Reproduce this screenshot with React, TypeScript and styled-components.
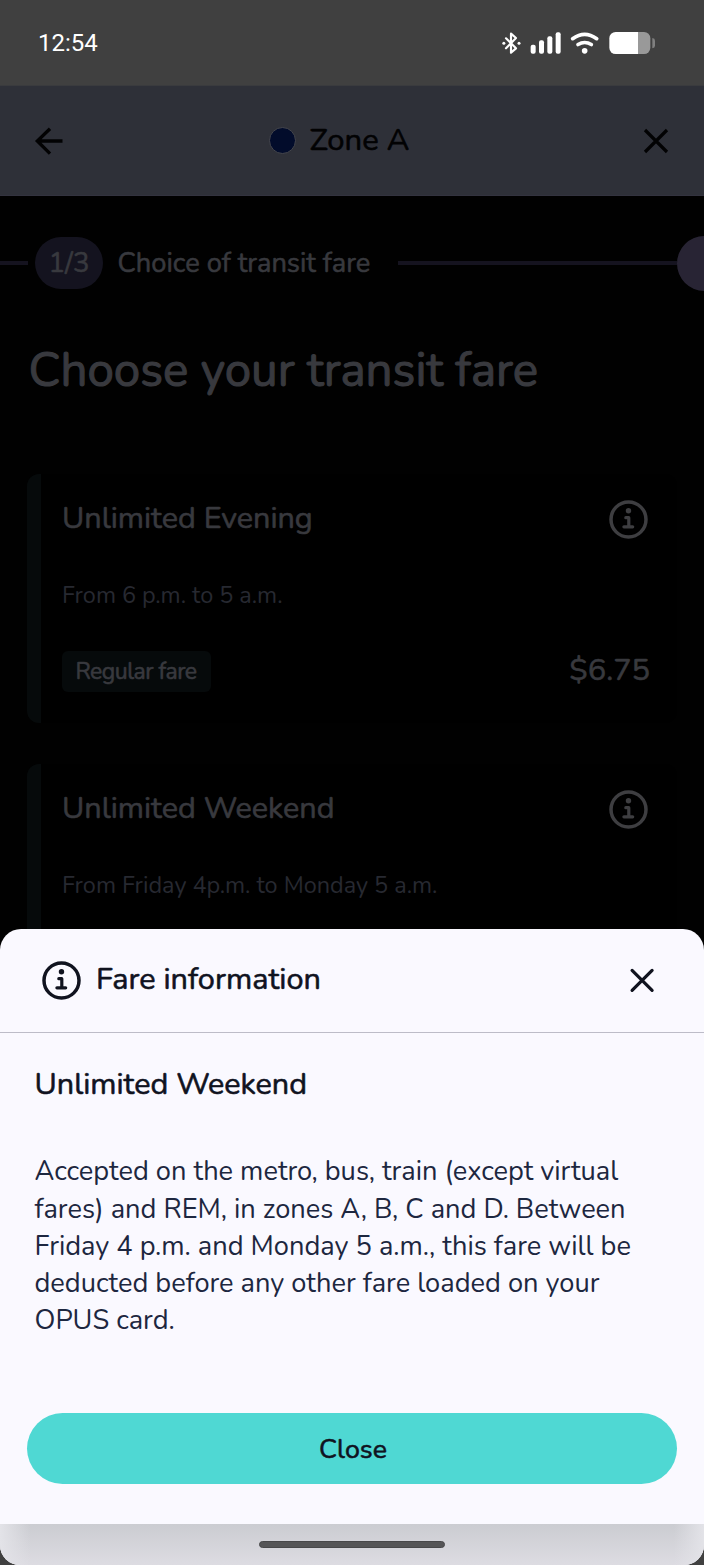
import React from 'react';
import styled, { createGlobalStyle } from 'styled-components';

const GlobalStyle = createGlobalStyle`
  * { box-sizing: border-box; }
  body {
    margin: 0;
    background: #404040;
    font-family: Nunito, Lato, "Open Sans", sans-serif;
    font-variant-ligatures: none;
  }
  h1, h2, h3, p { margin: 0; font-weight: 400; }
  button { border: 0; padding: 0; background: none; font: inherit; color: inherit; cursor: pointer; }
  svg { display: block; flex: none; }
`;

const Screen = styled.div`
  position: relative;
  width: 704px;
  height: 1565px;
  overflow: hidden;
  background: #404040;
  display: flex;
  flex-direction: column;
`;

/* Text with medium emphasis; $lift raises it optically inside centred rows. */
const Label = styled.span<{ $size: number; $lift?: number; $weight?: number; $track?: number }>`
  display: block;
  white-space: nowrap;
  font-size: ${(p) => p.$size}px;
  line-height: 1.2;
  letter-spacing: ${(p) => (p.$track ? `${p.$track}px` : 'normal')};
  padding-bottom: ${(p) => (p.$lift ?? 0) * 2}px;
  -webkit-text-stroke: ${(p) => p.$weight ?? 0.6}px currentColor;
`;

const StatusBar = styled.div`
  height: 86px;
  flex: none;
  display: flex;
  align-items: center;
  justify-content: space-between;
  padding: 0 49px 0 38px;
  border-bottom: 1px solid #3a3b3e;
  color: #fff;
`;

const Clock = styled.span`
  font: 400 24px/28px Roboto, sans-serif;
`;

const StatusIcons = styled.div`
  display: flex;
  align-items: center;
`;

const NavBar = styled.header`
  height: 110px;
  flex: none;
  display: flex;
  align-items: center;
  padding: 1px 35px 0 34px;
  background: #2e3038;
  border-bottom: 1px solid #33333f;
  color: #020203;
`;

const ZoneTitle = styled.div`
  display: flex;
  align-items: center;
  gap: 14px;
  margin: 0 auto 0 205.5px;
`;

const ZoneDot = styled.i`
  width: 27px;
  height: 27px;
  margin-bottom: 1px;
  border-radius: 50%;
  background: #020c2b;
  border: 1.5px solid #45464c;
`;

const Content = styled.main`
  height: 764px;
  flex: none;
  overflow: hidden;
  background: #010101;
  color: #38393e;
`;

const Stepper = styled.div`
  display: flex;
  align-items: center;
  height: 55px;
  margin-top: 40px;
`;

const StepLine = styled.i<{ $width?: number }>`
  height: 4px;
  margin-bottom: 1px;
  background: #15131f;
  ${(p) => (p.$width ? `width: ${p.$width}px; flex: none;` : 'flex: 1;')}
`;

const StepBadge = styled.div`
  display: flex;
  align-items: center;
  justify-content: center;
  width: 68px;
  height: 52px;
  margin: 0 15px 1px 7px;
  padding: 1px 0 0 1px;
  border-radius: 26px;
  background: #14131f;
`;

const NextStep = styled.i`
  width: 55px;
  height: 55px;
  flex: none;
  margin-right: -28px;
  border-radius: 50%;
  background: #282434;
`;

const StepName = styled.div`
  width: 280px;
  flex: none;
`;

const PageTitle = styled.h1`
  margin: 51.4px 0 73.6px 28.5px;
  font-size: 47.5px;
  line-height: 58px;
  -webkit-text-stroke: 1.1px currentColor;
`;

const FareList = styled.div`
  display: flex;
  flex-direction: column;
  gap: 41px;
  padding: 0 27px;
`;

const FareCard = styled.section`
  height: 249px;
  padding: 26px 29px 0 21px;
  background: #000;
  border-left: 14px solid #060a0b;
  border-radius: 12px;
`;

const CardRow = styled.div<{ $top?: number; $height: number }>`
  display: flex;
  align-items: center;
  justify-content: space-between;
  height: ${(p) => p.$height}px;
  margin-top: ${(p) => p.$top ?? 0}px;
`;

const Schedule = styled.p`
  margin-top: 40.8px;
  font-size: 23.45px;
  line-height: 30px;
  color: #272931;
`;

const Tag = styled.div`
  display: flex;
  align-items: center;
  height: 41px;
  width: 149px;
  padding-left: 13.5px;
  border-radius: 6px;
  background: #060a0b;
`;

const Price = styled.div`
  margin-right: -2px;
`;

/* The bottom sheet slides over the dimmed page. */
const Sheet = styled.div`
  position: absolute;
  left: 0;
  right: 0;
  bottom: 0;
  height: 636.5px;
  display: flex;
  flex-direction: column;
  overflow: hidden;
  border-radius: 21px 21px 20px 20px;
  background: #faf9ff;
  color: #10131f;
`;

const SheetHeader = styled.div`
  height: 104.5px;
  flex: none;
  display: flex;
  align-items: center;
  gap: 15px;
  padding: 0 49px 0 42px;
  border-bottom: 1.5px solid #bdbcc8;
`;

const SheetClose = styled.button`
  margin-left: auto;
`;

const SheetBody = styled.div`
  flex: 1;
  padding: 32.4px 27px 0 34.5px;
`;

const SheetTitle = styled.h2`
  font-size: 30.6px;
  line-height: 38px;
  -webkit-text-stroke: 0.6px currentColor;
`;

const Description = styled.p`
  margin-top: 50px;
  font-size: 27.23px;
  line-height: 37.2px;
  color: #1d2740;
`;

const Line = styled.span`
  display: block;
  white-space: nowrap;
`;

const CloseButton = styled.button`
  display: flex;
  align-items: center;
  justify-content: center;
  width: 650px;
  height: 71px;
  margin: 73.6px 0 0 -7.5px;
  padding: 1px 0 0 2px;
  border-radius: 36px;
  background: #4fd8d3;
`;

const HomeBar = styled.div`
  height: 41px;
  flex: none;
  display: flex;
  justify-content: center;
  padding-top: 17px;
  background:
    linear-gradient(90deg, #e3e3e8 0, rgba(227, 227, 232, 0) 30px, rgba(227, 227, 232, 0) 674px, #e3e3e8 100%),
    linear-gradient(#cbccd1, #dddce2);
`;

const HomeHandle = styled.i`
  width: 186px;
  height: 7px;
  border-radius: 4px;
  background: #555557;
  border: 1px solid #48484a;
`;

const InfoIcon = ({ color }: { color: string }) => (
  <svg width="39" height="39" viewBox="0 0 39 39" fill="none" stroke={color} strokeLinecap="round" strokeLinejoin="round">
    <circle cx="19.5" cy="19.5" r="17.5" strokeWidth="3.5" />
    <circle cx="19.5" cy="10.8" r="2.7" fill={color} stroke="none" />
    <path d="M16.8 17.7h3v9M14.9 26.8h8.8" strokeWidth="3.2" />
  </svg>
);

const CrossIcon = ({ round }: { round?: boolean }) => (
  <svg width="26" height="26" viewBox="0 0 26 26" fill="none" stroke="currentColor" strokeWidth="3.2" strokeLinecap={round ? 'round' : 'butt'}>
    {round ? <path d="M3.1 3.4l20 20M23.1 3.4l-20 20" /> : <path d="M2 2l22 22M24 2L2 24" />}
  </svg>
);

const BackIcon = () => (
  <svg width="29" height="28" viewBox="0 0 29 28" fill="none" stroke="currentColor" strokeWidth="3.3">
    <path d="M16 1.7L3.3 14 16 26.7M3.3 14h25.2" />
  </svg>
);

const BluetoothIcon = () => (
  <svg width="19" height="26" viewBox="65 60 57 78" fill="none" stroke="#fff" strokeWidth="6.5" strokeLinejoin="round" strokeLinecap="round">
    <path d="M77 85l30 30-15 13V71l15 13-30 31" />
    <circle cx="70.5" cy="99.5" r="4.5" fill="#fff" stroke="none" />
    <circle cx="116" cy="99.5" r="4.5" fill="#fff" stroke="none" />
  </svg>
);

const SignalIcon = () => (
  <svg width="31" height="26" viewBox="151 60 93 78" fill="#fff">
    <rect x="153" y="104" width="15" height="27" rx="6" />
    <rect x="178" y="91" width="15" height="40" rx="6" />
    <rect x="203" y="79" width="15" height="52" rx="6" />
    <rect x="228" y="67" width="15" height="64" rx="6" />
  </svg>
);

const WifiIcon = () => (
  <svg width="29" height="26" viewBox="271 60 87 78" fill="none" stroke="#fff" strokeWidth="11" strokeLinecap="round">
    <path d="M279 86Q315 60 351 86" />
    <path d="M295 103.500Q315 91.500 335 103.500" />
    <circle cx="315" cy="122.500" r="8.500" fill="#fff" stroke="none" />
  </svg>
);

const BatteryIcon = () => (
  <svg width="47" height="26" viewBox="384 60 141 78">
    <path d="M474 66h18a19 19 0 0 1 19 19v28a19 19 0 0 1-19 19h-18z" fill="#999" />
    <path d="M474 66h-67a19 19 0 0 0-19 19v28a19 19 0 0 0 19 19h67z" fill="#fff" />
    <path d="M517 84q8 1 8 8v15q0 7-8 8z" fill="#808080" />
  </svg>
);

const StatusGap = styled.i<{ $w: number }>`
  width: ${(p) => p.$w}px;
`;

interface Fare {
  name: string;
  schedule: string;
  tag?: string;
  price?: string;
}

const fares: Fare[] = [
  { name: 'Unlimited Evening', schedule: 'From 6 p.m. to 5 a.m.', tag: 'Regular fare', price: '$6.75' },
  { name: 'Unlimited Weekend', schedule: 'From Friday 4p.m. to Monday 5 a.m.' },
];

const description = [
  'Accepted on the metro, bus, train (except virtual',
  'fares) and REM, in zones A, B, C and D. Between',
  'Friday 4 p.m. and Monday 5 a.m., this fare will be',
  'deducted before any other fare loaded on your',
  'OPUS card.',
];

export default function App() {
  return (
    <>
      <GlobalStyle />
      <Screen>
        <StatusBar>
          <Clock>12:54</Clock>
          <StatusIcons>
            <BluetoothIcon />
            <StatusGap $w={9.5} />
            <SignalIcon />
            <StatusGap $w={9} />
            <WifiIcon />
            <StatusGap $w={9} />
            <BatteryIcon />
          </StatusIcons>
        </StatusBar>

        <NavBar>
          <button aria-label="Back"><BackIcon /></button>
          <ZoneTitle>
            <ZoneDot />
            <Label $size={31} $lift={0.7}>Zone A</Label>
          </ZoneTitle>
          <button aria-label="Close"><CrossIcon /></button>
        </NavBar>

        <Content>
          <Stepper>
            <StepLine $width={27.5} />
            <StepBadge>
              <Label $size={27.5}>1/3</Label>
            </StepBadge>
            <StepName>
              <Label $size={27.25} $lift={0.5}>Choice of transit fare</Label>
            </StepName>
            <StepLine />
            <NextStep />
          </Stepper>

          <PageTitle>Choose your transit fare</PageTitle>

          <FareList>
            {fares.map((f) => (
              <FareCard key={f.name}>
                <CardRow $height={39}>
                  <Label $size={30.6} $lift={1.1}>{f.name}</Label>
                  <InfoIcon color="#3e3e41" />
                </CardRow>
                <Schedule>{f.schedule}</Schedule>
                {f.tag && (
                  <CardRow $height={41} $top={41.2}>
                    <Tag>
                      <Label $size={23} $track={-0.5}>{f.tag}</Label>
                    </Tag>
                    <Price>
                      <Label $size={30.7} $lift={1.1}>{f.price}</Label>
                    </Price>
                  </CardRow>
                )}
              </FareCard>
            ))}
          </FareList>
        </Content>

        <Sheet role="dialog">
          <SheetHeader>
            <InfoIcon color="#10131f" />
            <Label $size={30.7} $lift={0.5}>Fare information</Label>
            <SheetClose aria-label="Close"><CrossIcon round /></SheetClose>
          </SheetHeader>
          <SheetBody>
            <SheetTitle>Unlimited Weekend</SheetTitle>
            <Description>
              {description.map((text) => (
                <Line key={text}>{text}</Line>
              ))}
            </Description>
            <CloseButton>
              <Label $size={26.8}>Close</Label>
            </CloseButton>
          </SheetBody>
          <HomeBar>
            <HomeHandle />
          </HomeBar>
        </Sheet>
      </Screen>
    </>
  );
}
